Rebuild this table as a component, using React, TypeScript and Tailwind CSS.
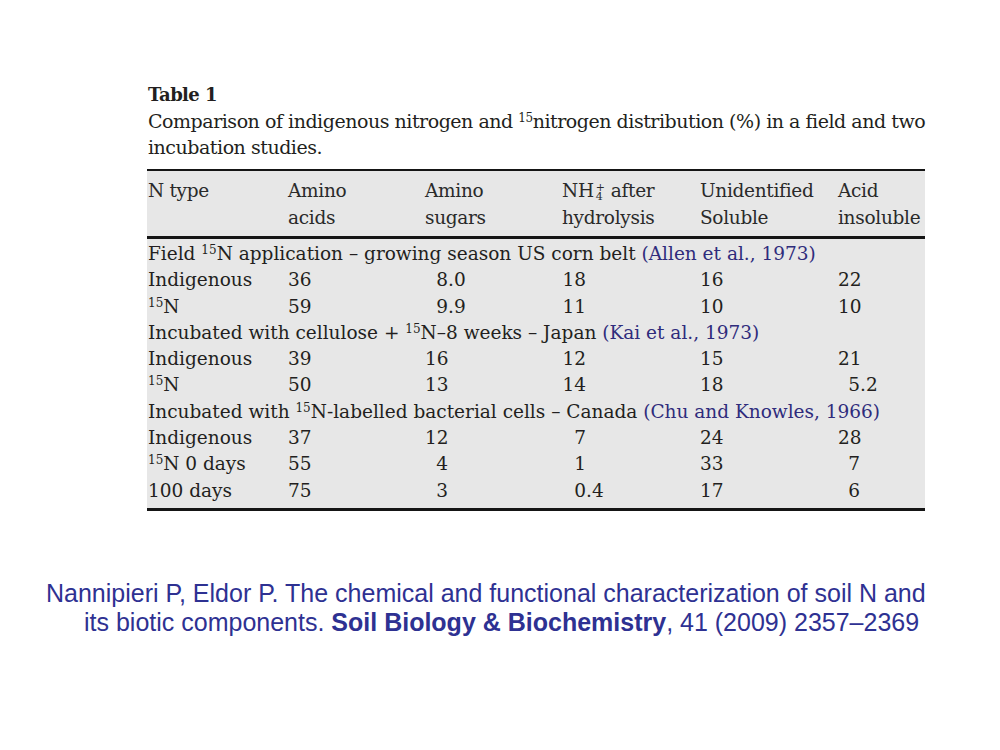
import React from "react";

type Cell = string | { i: string; f?: string };

interface Row {
  kind: "group" | "data";
  label?: React.ReactNode;
  cells?: Cell[];
  text?: React.ReactNode;
}

const Sup = ({ children }: { children: React.ReactNode }) => (
  <sup className="text-[12px]">{children}</sup>
);

const Cite = ({ children }: { children: React.ReactNode }) => (
  <span className="text-[#2f2c7c]">{children}</span>
);

const rows: Row[] = [
  {
    kind: "group",
    text: (
      <>
        Field <Sup>15</Sup>N application – growing season US corn belt <Cite>(Allen et al., 1973)</Cite>
      </>
    ),
  },
  { kind: "data", label: "Indigenous", cells: ["36", { i: "8", f: ".0" }, { i: "18" }, "16", { i: "22" }] },
  { kind: "data", label: <><Sup>15</Sup>N</>, cells: ["59", { i: "9", f: ".9" }, { i: "11" }, "10", { i: "10" }] },
  {
    kind: "group",
    text: (
      <>
        Incubated with cellulose + <Sup>15</Sup>N–8 weeks – Japan <Cite>(Kai et al., 1973)</Cite>
      </>
    ),
  },
  { kind: "data", label: "Indigenous", cells: ["39", { i: "16" }, { i: "12" }, "15", { i: "21" }] },
  { kind: "data", label: <><Sup>15</Sup>N</>, cells: ["50", { i: "13" }, { i: "14" }, "18", { i: "5", f: ".2" }] },
  {
    kind: "group",
    text: (
      <>
        Incubated with <Sup>15</Sup>N-labelled bacterial cells – Canada <Cite>(Chu and Knowles, 1966)</Cite>
      </>
    ),
  },
  { kind: "data", label: "Indigenous", cells: ["37", { i: "12" }, { i: "7" }, "24", { i: "28" }] },
  { kind: "data", label: <><Sup>15</Sup>N 0 days</>, cells: ["55", { i: "4" }, { i: "1" }, "33", { i: "7" }] },
  { kind: "data", label: "100 days", cells: ["75", { i: "3" }, { i: "0", f: ".4" }, "17", { i: "6" }] },
];

const grid = "grid grid-cols-[140px_137px_137px_138px_138px_1fr]";

// integer-part box widths per column, for decimal alignment
const intBox = ["", "w-[23px]", "w-[24px]", "", "w-[22px]"];

const NumCell = ({ cell, col }: { cell: Cell; col: number }) => {
  if (typeof cell === "string") return <div>{cell}</div>;
  return (
    <div className="whitespace-nowrap">
      <span className={`inline-block text-right ${intBox[col]}`}>{cell.i}</span>
      {cell.f}
    </div>
  );
};

export default function App() {
  return (
    <div className="w-[1000px] h-[750px] bg-white overflow-hidden">
      <div className="ml-[147px] pt-[82px] w-[778px] text-[#231f20] font-['DejaVu_Serif',serif]">
        <div className="pl-[1px] text-[18px] leading-[26px] font-bold tracking-[-0.6px]">Table 1</div>
        <div className="pl-[1px] text-[19px] leading-[26px] tracking-[-0.47px] whitespace-nowrap">
          Comparison of indigenous nitrogen and <Sup>15</Sup>nitrogen distribution (%) in a field and two
          <br />
          incubation studies.
        </div>

        <div className="mt-[9px] bg-[#e7e7e7] border-t-2 border-b-[3px] border-[#151515] text-[18.5px]">
          <div className={`${grid} pl-[1px] pt-[6px] pb-[5px] leading-[27px] text-[#2a2a2a] border-b-[3px] border-[#151515] tracking-[-0.3px]`}>
            <div>N type</div>
            <div>
              Amino
              <br />
              acids
            </div>
            <div>
              Amino
              <br />
              sugars
            </div>
            <div className="whitespace-nowrap">
              NH
              <span className="relative inline-block w-[17px] h-[1px]">
                <span className="absolute left-[2px] top-[-13px] text-[11px] leading-[9px]">+</span>
                <span className="absolute left-[2px] top-[-4px] text-[11px] leading-[9px]">4</span>
              </span>
              after
              <br />
              hydrolysis
            </div>
            <div>
              Unidentified
              <br />
              Soluble
            </div>
            <div className="whitespace-nowrap">
              Acid
              <br />
              insoluble
            </div>
          </div>

          <div className="pl-[1px] pt-[2px] pb-[4px] leading-[26.3px]">
            {rows.map((r, idx) =>
              r.kind === "group" ? (
                <div key={idx} className="whitespace-nowrap">
                  {r.text}
                </div>
              ) : (
                <div key={idx} className={grid}>
                  <div className="whitespace-nowrap">{r.label}</div>
                  {r.cells!.map((c, ci) => (
                    <NumCell key={ci} cell={c} col={ci} />
                  ))}
                </div>
              )
            )}
          </div>
        </div>
      </div>

      <div className="mt-[68px] pl-[46px] text-[25px] leading-[29px] text-[#2e3192] font-['Liberation_Sans',Arial,sans-serif] whitespace-nowrap">
        <div>Nannipieri P, Eldor P. The chemical and functional characterization of soil N and</div>
        <div className="pl-[38px]">
          its biotic components. <span className="font-bold">Soil Biology &amp; Biochemistry</span>, 41 (2009)
          2357–2369
        </div>
      </div>
    </div>
  );
}
